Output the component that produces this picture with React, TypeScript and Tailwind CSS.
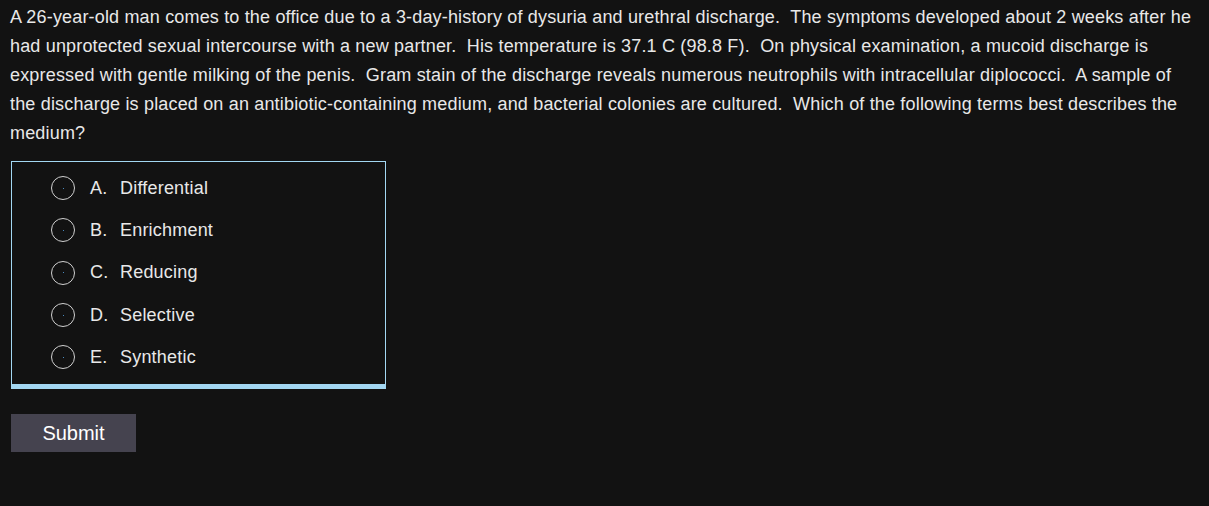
import React from "react";

const options = [
  { l: "A.", t: "Differential" },
  { l: "B.", t: "Enrichment" },
  { l: "C.", t: "Reducing" },
  { l: "D.", t: "Selective" },
  { l: "E.", t: "Synthetic" },
];

export default function App() {
  return (
    <div
      className="min-h-[506px] w-full bg-[#121212] text-[#e8e8e8] px-[10px] pt-[3px]"
      style={{ fontFamily: '"Liberation Sans", Arial, sans-serif' }}
    >
      <p className="text-[18px] leading-[29px] whitespace-pre-wrap tracking-[0.17px]">
        {"A 26-year-old man comes to the office due to a 3-day-history of dysuria and urethral discharge.  The symptoms developed about 2 weeks after he had unprotected sexual intercourse with a new partner.  His temperature is 37.1 C (98.8 F).  On physical examination, a mucoid discharge is expressed with gentle milking of the penis.  Gram stain of the discharge reveals numerous neutrophils with intracellular diplococci.  A sample of the discharge is placed on an antibiotic-containing medium, and bacterial colonies are cultured.  Which of the following terms best describes the medium?"}
      </p>
      <div className="mt-[13px] ml-[1px] w-[375px] border border-[#a3d7f2] border-b-[5px] pt-[5px] pb-[6px]">
        {options.map((o) => (
          <div key={o.l} className="flex items-center h-[42.3px] pl-[39px] tracking-[0.2px]">
            <span className="relative w-[24px] h-[24px] rounded-full border border-[#d0d0d0] flex items-center justify-center">
              <span className="w-[1px] h-[1px] bg-[#4a8ac0]" />
            </span>
            <span className="ml-[15px] text-[18px] w-[30px]">{o.l}</span>
            <span className="text-[18px]">{o.t}</span>
          </div>
        ))}
      </div>
      <button className="mt-[25px] ml-[1px] w-[125px] h-[38px] bg-[#45434f] text-white text-[20px] flex items-center justify-center">
        Submit
      </button>
    </div>
  );
}
